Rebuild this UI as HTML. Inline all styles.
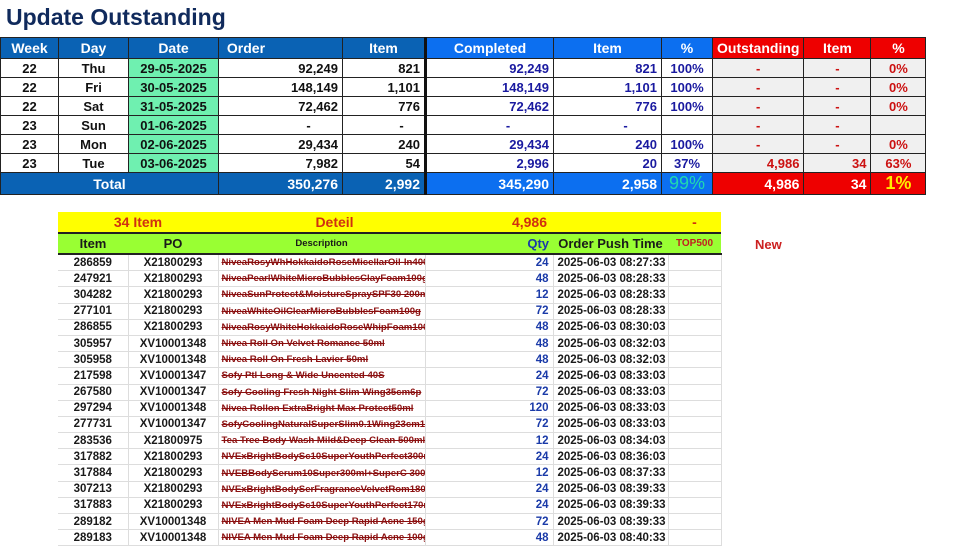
<!DOCTYPE html>
<html><head><style>
body{margin:0;width:960px;height:539px;overflow:hidden;background:#fff;font-family:"Liberation Sans",Arial,sans-serif;position:relative}
.t{position:absolute;font-weight:bold;color:#102a5c;font-size:23px;left:6px;top:4px}
table{border-collapse:collapse;table-layout:fixed;position:absolute}
td{padding:0 4px;white-space:nowrap;overflow:hidden;font-weight:bold}
#a{left:0;top:37px;font-size:13px}
#a td{border:1px solid #222;height:18px;color:#111}
#a tr.h td{height:20px;color:#fff;background:#0a62b4;font-size:14px}
#a tr.h td.b{background:#0c6ff0}
#a tr.h td.r{background:#ee0000}
#a td.g{background:#6ff0b0;text-align:center}
#a td.c{text-align:center}
#a td.n{text-align:right}
#a td.bl{color:#1a1aa0}
#a td.rd{color:#cc1111;background:#f0f0f0}
#a tr.tot td{height:21px;background:#0a62b4;color:#fff;font-size:14px}
#a tr.tot td.b{background:#0c6ff0}
#a tr.tot td.r{background:#ee0000}
.thick{border-left:3px solid #111!important}
#b{left:58px;top:212px;font-size:11.5px;width:663px}
#b td{height:15.2px;border-bottom:1px solid #ddd;border-right:1px solid #ddd;color:#1a1a1a}
#b tr.y td{background:#ffff00;color:#d03010;font-size:14px;height:20px;border:none}
#b tr.gr td{background:#99ff33;font-size:13px;height:19px;border-top:2px solid #222;border-bottom:2px solid #222;border-right:none}
#b td.d{font-size:9.6px;color:#8b1010;text-decoration:line-through;padding-left:3px}
#b td.q{text-align:right;color:#1a3aa8}
.new{position:absolute;left:755px;top:237px;color:#cc2020;font-weight:bold;font-size:13px}
</style></head><body>
<div class="t">Update Outstanding</div>
<table id="a">
<colgroup><col width="58"><col width="70"><col width="90"><col width="124"><col width="83"><col width="128"><col width="108"><col width="51"><col width="91"><col width="67"><col width="55"></colgroup>
<tr class="h"><td class="c">Week</td><td class="c">Day</td><td class="c">Date</td><td>&nbsp;Order</td><td class="c">Item</td><td class="c b thick">Completed</td><td class="c b">Item</td><td class="c b">%</td><td class="c r">Outstanding</td><td class="c r">Item</td><td class="c r">%</td></tr>
<tr><td class="c">22</td><td class="c">Thu</td><td class="g">29-05-2025</td><td class="n">92,249</td><td class="n">821</td><td class="n bl thick">92,249</td><td class="n bl">821</td><td class="c bl">100%</td><td class="c rd">-</td><td class="c rd">-</td><td class="c rd">0%</td></tr>
<tr><td class="c">22</td><td class="c">Fri</td><td class="g">30-05-2025</td><td class="n">148,149</td><td class="n">1,101</td><td class="n bl thick">148,149</td><td class="n bl">1,101</td><td class="c bl">100%</td><td class="c rd">-</td><td class="c rd">-</td><td class="c rd">0%</td></tr>
<tr><td class="c">22</td><td class="c">Sat</td><td class="g">31-05-2025</td><td class="n">72,462</td><td class="n">776</td><td class="n bl thick">72,462</td><td class="n bl">776</td><td class="c bl">100%</td><td class="c rd">-</td><td class="c rd">-</td><td class="c rd">0%</td></tr>
<tr><td class="c">23</td><td class="c">Sun</td><td class="g">01-06-2025</td><td class="c" style="padding-left:60px">-</td><td class="c" style="padding-left:40px">-</td><td class="c bl thick" style="padding-left:40px">-</td><td class="c bl" style="padding-left:40px">-</td><td class="c bl"></td><td class="c rd">-</td><td class="c rd">-</td><td class="c rd"></td></tr>
<tr><td class="c">23</td><td class="c">Mon</td><td class="g">02-06-2025</td><td class="n">29,434</td><td class="n">240</td><td class="n bl thick">29,434</td><td class="n bl">240</td><td class="c bl">100%</td><td class="c rd">-</td><td class="c rd">-</td><td class="c rd">0%</td></tr>
<tr><td class="c">23</td><td class="c">Tue</td><td class="g">03-06-2025</td><td class="n">7,982</td><td class="n">54</td><td class="n bl thick">2,996</td><td class="n bl">20</td><td class="c bl">37%</td><td class="n rd">4,986</td><td class="n rd">34</td><td class="c rd">63%</td></tr>
<tr class="tot"><td colspan="3" class="c">Total</td><td class="n">350,276</td><td class="n">2,992</td><td class="n b thick">345,290</td><td class="n b">2,958</td><td class="c b" style="color:#20d8b0;font-size:18px;font-weight:normal">99%</td><td class="n r">4,986</td><td class="n r">34</td><td class="c r" style="color:#ffee00;font-size:18px">1%</td></tr>
</table>
<div class="new">New</div>
<table id="b">
<colgroup><col width="70"><col width="90"><col width="207"><col width="128"><col width="115"><col width="53"></colgroup>
<tr class="y"><td colspan="2" style="text-align:center">34 Item</td><td style="text-align:center;padding-left:30px">Deteil</td><td style="text-align:right;padding-right:6px">4,986</td><td></td><td style="text-align:center">-</td></tr>
<tr class="gr"><td style="text-align:center">Item</td><td style="text-align:center">PO</td><td style="text-align:center;font-size:9.5px">Description</td><td style="text-align:right;color:#1a3aa8">Qty</td><td style="text-align:center">Order Push Time</td><td style="text-align:center;color:#c02020;font-size:10px">TOP500</td></tr>
<tr><td style="text-align:center">286859</td><td style="text-align:center">X21800293</td><td class="d">NiveaRosyWhHokkaidoRoseMicellarOil-In400</td><td class="q">24</td><td>2025-06-03 08:27:33</td><td></td></tr>
<tr><td style="text-align:center">247921</td><td style="text-align:center">X21800293</td><td class="d">NiveaPearlWhiteMicroBubblesClayFoam100g</td><td class="q">48</td><td>2025-06-03 08:28:33</td><td></td></tr>
<tr><td style="text-align:center">304282</td><td style="text-align:center">X21800293</td><td class="d">NiveaSunProtect&amp;MoistureSpraySPF30 200ml</td><td class="q">12</td><td>2025-06-03 08:28:33</td><td></td></tr>
<tr><td style="text-align:center">277101</td><td style="text-align:center">X21800293</td><td class="d">NiveaWhiteOilClearMicroBubblesFoam100g</td><td class="q">72</td><td>2025-06-03 08:28:33</td><td></td></tr>
<tr><td style="text-align:center">286855</td><td style="text-align:center">X21800293</td><td class="d">NiveaRosyWhiteHokkaidoRoseWhipFoam100</td><td class="q">48</td><td>2025-06-03 08:30:03</td><td></td></tr>
<tr><td style="text-align:center">305957</td><td style="text-align:center">XV10001348</td><td class="d">Nivea Roll On Velvet Romance 50ml</td><td class="q">48</td><td>2025-06-03 08:32:03</td><td></td></tr>
<tr><td style="text-align:center">305958</td><td style="text-align:center">XV10001348</td><td class="d">Nivea Roll On Fresh Lavier 50ml</td><td class="q">48</td><td>2025-06-03 08:32:03</td><td></td></tr>
<tr><td style="text-align:center">217598</td><td style="text-align:center">XV10001347</td><td class="d">Sofy Ptl Long &amp; Wide Uncented 40S</td><td class="q">24</td><td>2025-06-03 08:33:03</td><td></td></tr>
<tr><td style="text-align:center">267580</td><td style="text-align:center">XV10001347</td><td class="d">Sofy Cooling Fresh Night Slim Wing35cm6p</td><td class="q">72</td><td>2025-06-03 08:33:03</td><td></td></tr>
<tr><td style="text-align:center">297294</td><td style="text-align:center">XV10001348</td><td class="d">Nivea Rollon ExtraBright Max Protect50ml</td><td class="q">120</td><td>2025-06-03 08:33:03</td><td></td></tr>
<tr><td style="text-align:center">277731</td><td style="text-align:center">XV10001347</td><td class="d">SofyCoolingNaturalSuperSlim0.1Wing23cm14</td><td class="q">72</td><td>2025-06-03 08:33:03</td><td></td></tr>
<tr><td style="text-align:center">283536</td><td style="text-align:center">X21800975</td><td class="d">Tea Tree Body Wash Mild&amp;Deep Clean 500ml</td><td class="q">12</td><td>2025-06-03 08:34:03</td><td></td></tr>
<tr><td style="text-align:center">317882</td><td style="text-align:center">X21800293</td><td class="d">NVExBrightBodySc10SuperYouthPerfect300ml</td><td class="q">24</td><td>2025-06-03 08:36:03</td><td></td></tr>
<tr><td style="text-align:center">317884</td><td style="text-align:center">X21800293</td><td class="d">NVEBBodySerum10Super300ml+SuperC 300ml</td><td class="q">12</td><td>2025-06-03 08:37:33</td><td></td></tr>
<tr><td style="text-align:center">307213</td><td style="text-align:center">X21800293</td><td class="d">NVExBrightBodySerFragranceVelvetRom180ml</td><td class="q">24</td><td>2025-06-03 08:39:33</td><td></td></tr>
<tr><td style="text-align:center">317883</td><td style="text-align:center">X21800293</td><td class="d">NVExBrightBodySc10SuperYouthPerfect170ml</td><td class="q">24</td><td>2025-06-03 08:39:33</td><td></td></tr>
<tr><td style="text-align:center">289182</td><td style="text-align:center">XV10001348</td><td class="d">NIVEA Men Mud Foam Deep Rapid Acne 150g</td><td class="q">72</td><td>2025-06-03 08:39:33</td><td></td></tr>
<tr><td style="text-align:center">289183</td><td style="text-align:center">XV10001348</td><td class="d">NIVEA Men Mud Foam Deep Rapid Acne 100g</td><td class="q">48</td><td>2025-06-03 08:40:33</td><td></td></tr>
</table>
</body></html>
